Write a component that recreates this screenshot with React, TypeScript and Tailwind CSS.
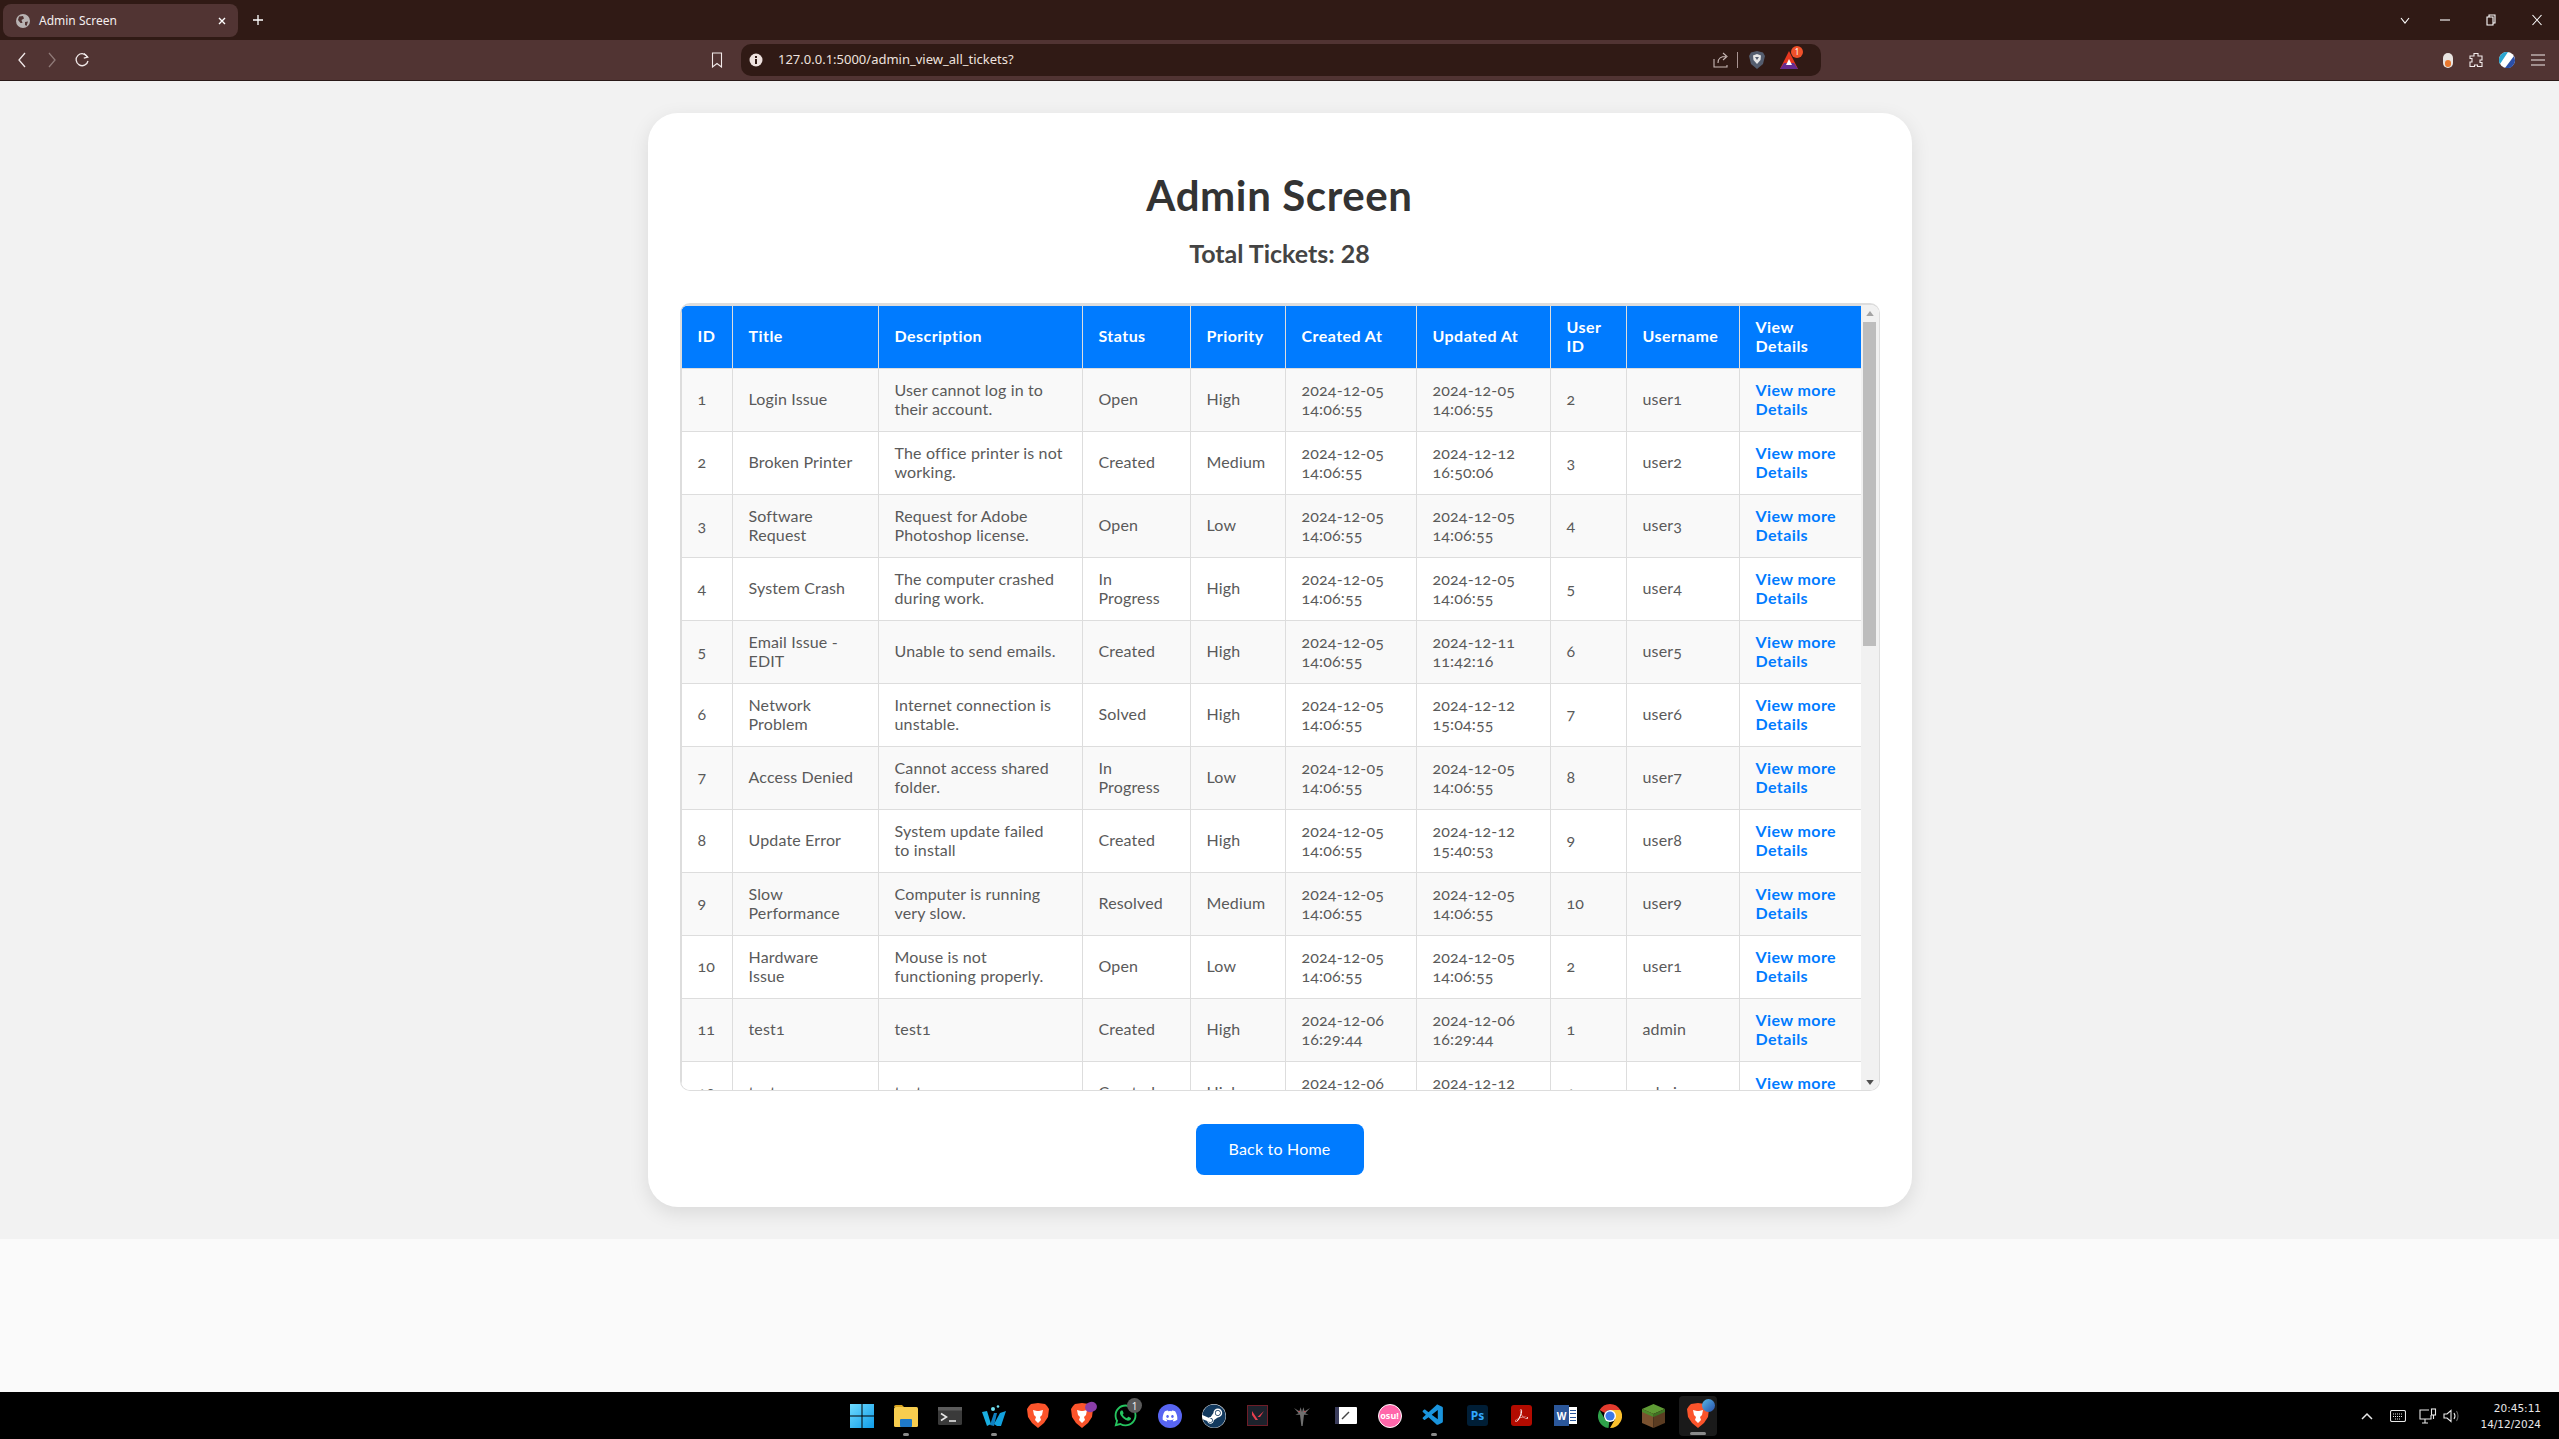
import React from 'react';
import { FaWhatsapp, FaDiscord, FaSteam } from 'react-icons/fa';
import { VscVscode } from 'react-icons/vsc';
import { SiAdobeacrobatreader } from 'react-icons/si';

type Row = { id: number; title: string; desc: string; status: string; pri: string; cr: string; up: string; uid: number; user: string };
const d5 = '2024-12-05\n14:06:55';
const rows: Row[] = [
  { id: 1, title: 'Login Issue', desc: 'User cannot log in to\ntheir account.', status: 'Open', pri: 'High', cr: d5, up: d5, uid: 2, user: 'user1' },
  { id: 2, title: 'Broken Printer', desc: 'The office printer is not\nworking.', status: 'Created', pri: 'Medium', cr: d5, up: '2024-12-12\n16:50:06', uid: 3, user: 'user2' },
  { id: 3, title: 'Software\nRequest', desc: 'Request for Adobe\nPhotoshop license.', status: 'Open', pri: 'Low', cr: d5, up: d5, uid: 4, user: 'user3' },
  { id: 4, title: 'System Crash', desc: 'The computer crashed\nduring work.', status: 'In\nProgress', pri: 'High', cr: d5, up: d5, uid: 5, user: 'user4' },
  { id: 5, title: 'Email Issue -\nEDIT', desc: 'Unable to send emails.', status: 'Created', pri: 'High', cr: d5, up: '2024-12-11\n11:42:16', uid: 6, user: 'user5' },
  { id: 6, title: 'Network\nProblem', desc: 'Internet connection is\nunstable.', status: 'Solved', pri: 'High', cr: d5, up: '2024-12-12\n15:04:55', uid: 7, user: 'user6' },
  { id: 7, title: 'Access Denied', desc: 'Cannot access shared\nfolder.', status: 'In\nProgress', pri: 'Low', cr: d5, up: d5, uid: 8, user: 'user7' },
  { id: 8, title: 'Update Error', desc: 'System update failed\nto install', status: 'Created', pri: 'High', cr: d5, up: '2024-12-12\n15:40:53', uid: 9, user: 'user8' },
  { id: 9, title: 'Slow\nPerformance', desc: 'Computer is running\nvery slow.', status: 'Resolved', pri: 'Medium', cr: d5, up: d5, uid: 10, user: 'user9' },
  { id: 10, title: 'Hardware\nIssue', desc: 'Mouse is not\nfunctioning properly.', status: 'Open', pri: 'Low', cr: d5, up: d5, uid: 2, user: 'user1' },
  { id: 11, title: 'test1', desc: 'test1', status: 'Created', pri: 'High', cr: '2024-12-06\n16:29:44', up: '2024-12-06\n16:29:44', uid: 1, user: 'admin' },
  { id: 12, title: 'testes', desc: 'testes', status: 'Created', pri: 'High', cr: '2024-12-06\n16:30:02', up: '2024-12-12\n16:10:21', uid: 1, user: 'admin' },
];

const th = 'border border-[#dddddd] bg-[#007bff] px-4 pb-[3px] text-left align-middle text-[16px] font-bold leading-[19px] tracking-[0.45px] text-white whitespace-pre-line';
const td = 'border border-[#dddddd] px-4 pb-[3px] align-middle text-[16px] font-normal leading-[19px] tracking-[0.15px] text-[#5a5a5a] whitespace-pre-line h-[63px]';

function Thin({ children, w = 16, h = 16 }: { children: React.ReactNode; w?: number; h?: number }) {
  return (
    <svg width={w} height={h} viewBox={`0 0 ${w} ${h}`} fill="none" stroke="currentColor" strokeWidth="1.1">
      {children}
    </svg>
  );
}

function TitleBar() {
  return (
    <div className="flex h-[40px] items-start bg-[#301a15] text-white">
      <div className="ml-[3px] mt-[4px] flex h-[33px] w-[235px] items-center rounded-[8px] bg-[#513433] pl-[13px] pr-[11px]">
        <svg width="14" height="14" viewBox="0 0 14 14">
          <circle cx="7" cy="7" r="7" fill="#b9b3b3" />
          <path d="M3 2.5 L7 2 L8 4.5 L5.5 6 L6.5 9 L4.5 9 L2 6 Z M9 8 L12 7.5 L10.5 12 L9 11 Z" fill="#513433" />
        </svg>
        <span className="ml-[9px] flex-1 font-['Noto_Sans'] text-[12px] text-[#f5eeee]">Admin Screen</span>
        <Thin w={10} h={10}><path d="M2 2 L8 8 M8 2 L2 8" strokeWidth="1.4" /></Thin>
      </div>
      <div className="ml-[14px] mt-[14px]">
        <Thin w={12} h={12}><path d="M6 1 V11 M1 6 H11" strokeWidth="1.3" /></Thin>
      </div>
      <div className="ml-auto mt-[14px] flex items-center">
        <Thin w={10} h={10}><path d="M1 3 L5 8 L9 3" /></Thin>
        <div className="ml-[30px]"><Thin w={10} h={10}><path d="M0 5 H10" /></Thin></div>
        <div className="ml-[36px]"><Thin w={10} h={12}><path d="M1 3 H7 V11 H1 Z M3 3 V1 H9 V9 H7" /></Thin></div>
        <div className="ml-[36px] mr-[17px]"><Thin w={10} h={12}><path d="M0.5 1 L9.5 11 M9.5 1 L0.5 11" /></Thin></div>
      </div>
    </div>
  );
}

function Toolbar() {
  return (
    <div className="flex h-[41px] items-center border-b border-[#2a1a18] bg-[#513433] text-[#f1e9e9]">
      <div className="ml-[17px]"><Thin w={10} h={16}><path d="M8 1 L2 8 L8 15" strokeWidth="1.3" /></Thin></div>
      <div className="ml-[20px] text-[#8f7a78]"><Thin w={10} h={16}><path d="M2 1 L8 8 L2 15" strokeWidth="1.3" /></Thin></div>
      <div className="ml-[17px]">
        <Thin w={16} h={16}><path d="M13.5 5 A6 6 0 1 0 14 9" strokeWidth="1.3" /><path d="M10 1.5 L13.8 5.2 L9.8 6.2" strokeWidth="1.2" /></Thin>
      </div>
      <div className="ml-[621px]"><Thin w={12} h={16}><path d="M1.5 1 H10.5 V15 L6 11.5 L1.5 15 Z" /></Thin></div>
      <div className="ml-[18px] flex h-[32px] w-[1080px] items-center rounded-[10px] bg-[#301a15] pl-[8px]">
        <svg width="14" height="14" viewBox="0 0 14 14">
          <circle cx="7" cy="7" r="6.5" fill="#eee2df" />
          <rect x="6" y="6" width="2" height="5" fill="#301a15" />
          <rect x="6" y="3" width="2" height="2" fill="#301a15" />
        </svg>
        <span className="ml-[15px] font-['Noto_Sans'] text-[13px] text-[#eee2df]">127.0.0.1:5000/admin_view_all_tickets?</span>
        <div className="ml-auto flex items-center text-[#c9b9b6]">
          <Thin w={16} h={16}><path d="M1 7 V15 H14 V13 M5 11 C5 6 8 4.5 13 4.5 M10 1 L14 4.5 L10 8" /></Thin>
          <div className="ml-[8px] h-[16px] w-px bg-[#a89492]" />
          <svg className="ml-[11px]" width="16" height="18" viewBox="0 0 16 18">
            <path d="M8 0 L14 1.5 L16 5 L14 13 L8 18 L2 13 L0 5 L2 1.5 Z" fill="#545d6e" />
            <path d="M8 3 L12 4.5 L11.5 9 L8 13 L4.5 9 L4 4.5 Z" fill="#e6e6e6" />
            <path d="M6 6 H10 L8 9 Z" fill="#545d6e" />
          </svg>
          <div className="relative ml-[15px] mr-[23px] h-[18px] w-[18px]">
            <svg width="18" height="18" viewBox="0 0 18 18">
              <path d="M9 0 L18 18 H0 Z" fill="#e8371f" />
              <path d="M4 12 H14 L18 18 H0 Z" fill="#662d91" />
              <path d="M9 8 L12 14 H6 Z" fill="#ffffff" />
            </svg>
            <span className="absolute right-[-5px] top-[-5px] flex h-[12px] w-[12px] items-center justify-center rounded-full bg-[#f0512a] font-['Noto_Sans'] text-[8px] leading-none text-white">1</span>
          </div>
        </div>
      </div>
      <div className="ml-auto mr-[13px] flex items-center gap-[15px]">
        <div className="relative h-[15px] w-[10px] rounded-full bg-[#e9e4e1]"><div className="absolute bottom-[1px] left-[2px] h-[7px] w-[6px] rounded-full bg-[#e8772e]" /></div>
        <Thin w={16} h={16}><path d="M6 1.5 H10 V4 H14 V8 H12 V10.5 H14 V14.5 H9.5 V13 H6.5 V14.5 H2 V10 H4 V6.5 H2 V4 H6 Z" /></Thin>
        <svg width="16" height="16" viewBox="0 0 16 16">
          <circle cx="8" cy="8" r="8" fill="#ffffff" />
          <path d="M8 0 A8 8 0 0 0 1 12 L9 0 Z" fill="#2aa5cf" />
          <path d="M15 4 L6 16 A8 8 0 0 0 16 8 Z" fill="#2b4fa8" />
        </svg>
        <Thin w={16} h={14}><path d="M1 2 H15 M1 7 H15 M1 12 H15" strokeWidth="1.2" /></Thin>
      </div>
    </div>
  );
}

function Scrollbar() {
  return (
    <div className="flex w-[18px] flex-col items-center bg-[#f1f1f1]">
      <div className="flex h-[17px] items-center justify-center">
        <svg width="8" height="5" viewBox="0 0 9 6"><path d="M4.5 0 L9 6 H0 Z" fill="#a3a3a3" /></svg>
      </div>
      <div className="h-[324px] w-[13px] bg-[#bdbdbd]" />
      <div className="mb-[3px] mt-auto flex h-[10px] items-center justify-center">
        <svg width="8" height="5" viewBox="0 0 9 6"><path d="M4.5 6 L9 0 H0 Z" fill="#505050" /></svg>
      </div>
    </div>
  );
}

function TicketTable() {
  return (
    <div className="flex h-[788px] overflow-hidden rounded-[10px] border-t-2 border-b border-l border-r border-[#dddddd]">
      <div className="w-[1181px] overflow-hidden">
        <table className="w-[1181px] table-fixed border-collapse oldstyle-nums">
          <colgroup>
            <col className="w-[51px]" /><col className="w-[146px]" /><col className="w-[204px]" /><col className="w-[108px]" /><col className="w-[95px]" />
            <col className="w-[131px]" /><col className="w-[134px]" /><col className="w-[76px]" /><col className="w-[113px]" /><col className="w-[123px]" />
          </colgroup>
          <thead>
            <tr className="h-[63px]">
              {['ID', 'Title', 'Description', 'Status', 'Priority', 'Created At', 'Updated At', 'User\nID', 'Username', 'View\nDetails'].map((h) => (
                <th key={h} className={th}>{h}</th>
              ))}
            </tr>
          </thead>
          <tbody>
            {rows.map((r, i) => (
              <tr key={r.id} className={i % 2 === 0 ? 'bg-[#f9f9f9]' : 'bg-white'}>
                <td className={td}>{r.id}</td>
                <td className={td}>{r.title}</td>
                <td className={td}>{r.desc}</td>
                <td className={td}>{r.status}</td>
                <td className={td}>{r.pri}</td>
                <td className={td}>{r.cr}</td>
                <td className={td}>{r.up}</td>
                <td className={td}>{r.uid}</td>
                <td className={td}>{r.user}</td>
                <td className={td}>
                  <a href="#" className="font-bold tracking-[0.4px] text-[#007bff]">View more<br />Details</a>
                </td>
              </tr>
            ))}
          </tbody>
        </table>
      </div>
      <Scrollbar />
    </div>
  );
}

const Brave = ({ c = '#fb542b' }: { c?: string }) => (
  <svg width="22" height="25" viewBox="0 0 22 25">
    <path d="M11 0 L18 1 L20 3 L22 6 L21 14 L17 20 L11 25 L5 20 L1 14 L0 6 L2 3 L4 1 Z" fill={c} />
    <path d="M6 7 L10 8 H12 L16 7 L15 12 L13 14 L14 17 L11 20 L8 17 L9 14 L7 12 Z" fill="#ffffff" />
  </svg>
);

function Dock() {
  const items: React.ReactNode[] = [
    <svg width="24" height="24" viewBox="0 0 24 24"><defs><linearGradient id="w" x1="0" y1="0" x2="1" y2="1"><stop offset="0" stopColor="#6fdcff" /><stop offset="1" stopColor="#0f9be8" /></linearGradient></defs><path d="M0 0 H11.5 V11.5 H0 Z M12.5 0 H24 V11.5 H12.5 Z M0 12.5 H11.5 V24 H0 Z M12.5 12.5 H24 V24 H12.5 Z" fill="url(#w)" /></svg>,
    <svg width="24" height="23" viewBox="0 0 24 23"><path d="M0 3 Q0 1 2 1 H8 L10 3 H0 Z" fill="#d9a520" /><rect x="0" y="3" width="24" height="20" rx="1.5" fill="#f7cd4f" /><rect x="6" y="15" width="12" height="8" rx="1" fill="#1f79c8" /></svg>,
    <svg width="24" height="18" viewBox="0 0 24 18"><rect width="24" height="18" rx="1.5" fill="#3a3a3a" /><rect width="24" height="3.5" fill="#5c5c5c" /><path d="M3 6.5 L8.5 10 L3 13.5" fill="none" stroke="#e5e5e5" strokeWidth="1.6" /><path d="M11 14 H18" stroke="#e5e5e5" strokeWidth="1.6" /></svg>,
    <svg width="24" height="22" viewBox="0 0 24 22"><path d="M0 7 L5 6 L9 19 L5 21 Z" fill="#19aee0" /><path d="M8 20 L12 8 L15 8 L12 21 Z" fill="#0f7fc0" /><path d="M12 19 L18 8 L24 6 L19 21 L15 21 Z" fill="#12a1dd" /><circle cx="11" cy="4" r="2" fill="#6fe0f0" /><circle cx="16" cy="1.5" r="1.3" fill="#6fe0f0" /></svg>,
    <Brave />,
    <div className="relative h-[25px] w-[22px]"><Brave /><div className="absolute right-[-4px] top-[-1px] h-[10px] w-[12px] rotate-[-20deg] rounded-full bg-[#8a3ea8]" /></div>,
    <div className="relative"><FaWhatsapp size={25} color="#25c45f" /><span className="absolute right-[-4px] top-[-5px] flex h-[15px] w-[15px] items-center justify-center rounded-full bg-[#5a5a5a] font-['Noto_Sans'] text-[10px] leading-none text-[#eeeeee]">1</span></div>,
    <div className="flex h-[24px] w-[24px] items-center justify-center rounded-full bg-[#5865f2]"><FaDiscord size={16} color="#ffffff" /></div>,
    <div className="flex h-[24px] w-[24px] items-center justify-center rounded-full bg-white"><FaSteam size={24} color="#12395e" /></div>,
    <div className="flex h-[21px] w-[21px] items-center justify-center border border-[#6e1d28] bg-[#1d222c]"><svg width="12" height="9" viewBox="0 0 12 9"><path d="M0 0 L6 9 H3.5 L0 4 Z M12 0 L8 6 H5.5 Z" fill="#e8404f" /></svg></div>,
    <svg width="16" height="20" viewBox="0 0 24 30"><path d="M0 3 L8 8 L10 2 L12 9 L14 2 L16 8 L24 3 L17 11 L22 13 L15 13 L13 30 L11 30 L9 13 L2 13 L7 11 Z" fill="#6f6f6f" /><path d="M7 7 L10 9 L7 9 Z M17 7 L14 9 L17 9 Z" fill="#d8404a" /></svg>,
    <div className="relative flex h-[17px] w-[22px] items-center justify-center rounded-[1px] bg-white"><div className="absolute left-0 h-full w-[4px] bg-[#3b3d5c]" /><svg width="9" height="9" viewBox="0 0 9 9"><path d="M1 8 L8 1" stroke="#444" strokeWidth="1.4" /></svg></div>,
    <div className="flex h-[24px] w-[24px] items-center justify-center rounded-full border border-white bg-[#ff66aa] font-['Noto_Sans'] text-[9px] font-bold leading-none text-white">osu!</div>,
    <VscVscode size={25} color="#1a94dc" />,
    <div className="flex h-[21px] w-[21px] items-center justify-center rounded-[3px] bg-[#001e36] font-['Noto_Sans'] text-[12px] font-bold leading-none text-[#31a8ff]">Ps</div>,
    <div className="flex h-[21px] w-[21px] items-center justify-center rounded-[3px] bg-[#b30b00]"><SiAdobeacrobatreader size={13} color="#ffffff" /></div>,
    <div className="relative h-[21px] w-[23px]"><div className="absolute right-0 top-[2px] h-[17px] w-[14px] bg-white" /><div className="absolute right-[1px] top-[5px] flex h-[11px] w-[6px] flex-col justify-between"><i className="h-px bg-[#2b579a]" /><i className="h-px bg-[#2b579a]" /><i className="h-px bg-[#2b579a]" /><i className="h-px bg-[#2b579a]" /></div><div className="absolute left-0 top-0 flex h-[21px] w-[15px] items-center justify-center bg-[#2b579a] font-['Noto_Sans'] text-[10px] font-bold leading-none text-white">W</div></div>,
    <svg width="24" height="24" viewBox="0 0 24 24"><path d="M12 0 A12 12 0 0 1 22.4 6 H12 A6 6 0 0 0 6.8 9 L1.6 6 A12 12 0 0 1 12 0 Z" fill="#e33b2e" /><path d="M1.6 6 L6.8 15 L12 12 H12 L10.5 24 A12 12 0 0 1 1.6 6 Z" fill="#2fa24a" /><path d="M22.4 6 A12 12 0 0 1 12 24 L17.2 15 L12 6 Z" fill="#fbc02d" /><circle cx="12" cy="12" r="6" fill="#ffffff" /><circle cx="12" cy="12" r="4.6" fill="#3b78e7" /></svg>,
    <svg width="23" height="24" viewBox="0 0 23 24"><path d="M11.5 0 L23 5 L11.5 10 L0 5 Z" fill="#5f9b35" /><path d="M0 5 L11.5 10 V24 L0 19 Z" fill="#7a5230" /><path d="M23 5 L11.5 10 V24 L23 19 Z" fill="#5b3c22" /><path d="M0 5 L11.5 10 V13 L0 8 Z" fill="#4f8a2c" /><path d="M23 5 L11.5 10 V13 L23 8 Z" fill="#3f7324" /></svg>,
    <div className="relative flex h-[40px] w-[38px] items-center justify-center rounded-[4px] bg-[#1a1a1a]"><div className="relative"><Brave /><div className="absolute right-[-6px] top-[-4px] h-[13px] w-[13px] rounded-full bg-gradient-to-br from-[#58b7e8] to-[#2b4fa8]" /></div><div className="absolute bottom-[1px] h-[3px] w-[16px] rounded-full bg-[#8a8a8a]" /></div>,
  ];
  const running = new Set([1, 3, 13]);
  return (
    <div className="flex items-center">
      {items.map((node, i) => (
        <div key={i} className="relative flex h-[47px] w-[44px] items-center justify-center">
          {node}
          {running.has(i) && <div className="absolute bottom-[3px] h-[3px] w-[6px] rounded-full bg-[#8a8a8a]" />}
        </div>
      ))}
    </div>
  );
}

function Taskbar() {
  return (
    <div className="relative flex h-[47px] items-center justify-center bg-black">
      <Dock />
      <div className="absolute right-[18px] top-0 flex h-full items-center text-[#e8e8e8]">
        <Thin w={12} h={8}><path d="M1 7 L6 2 L11 7" strokeWidth="1.5" /></Thin>
        <div className="ml-[17px]"><Thin w={16} h={12}><rect x="0.5" y="0.5" width="15" height="11" rx="1.5" /><path d="M3 4 H13 M3 6.5 H13 M5 9 H11" strokeDasharray="1 1" /></Thin></div>
        <div className="ml-[13px]"><Thin w={18} h={16}><path d="M10 2 H1 V11 H12 V7 M6 11 V15 M3 15 H9" /><rect x="12.5" y="1" width="4" height="6" /><path d="M14.5 7 V11" /></Thin></div>
        <div className="ml-[6px]"><Thin w={18} h={14}><path d="M1 5 H4 L8 1.5 V12.5 L4 9 H1 Z M11 4 Q13 7 11 10" /><path d="M13.5 2 Q16.5 7 13.5 12" stroke="#666" /></Thin></div>
        <div className="ml-[19px] text-right font-['DejaVu_Sans'] text-[10.5px] leading-[16px]">
          <div>20:45:11</div>
          <div>14/12/2024</div>
        </div>
      </div>
    </div>
  );
}

export default function App() {
  return (
    <div className="flex h-[1439px] flex-col overflow-hidden bg-[#fafafa] font-['Lato','Open_Sans',sans-serif]">
      <TitleBar />
      <Toolbar />
      <main className="flex-1">
        <div className="bg-[#f2f2f2] py-8">
          <section className="mx-auto w-[1264px] rounded-[30px] bg-white p-8 shadow-[0_6px_20px_rgba(0,0,0,0.1)]">
            <h1 className="mt-[26px] text-center text-[42px] font-bold leading-[48px] tracking-[0.6px] text-[#333333]">Admin Screen</h1>
            <h2 className="mt-[19px] text-center text-[25px] font-bold leading-[30px] text-[#444444]">Total Tickets: 28</h2>
            <div className="mt-[35px]"><TicketTable /></div>
            <div className="mt-[33px] flex justify-center">
              <a href="#" className="flex h-[51px] w-[168px] items-center justify-center rounded-[8px] bg-[#007bff] pb-[2px] text-[16px] tracking-[0.2px] text-white">Back to Home</a>
            </div>
          </section>
        </div>
      </main>
      <Taskbar />
    </div>
  );
}
